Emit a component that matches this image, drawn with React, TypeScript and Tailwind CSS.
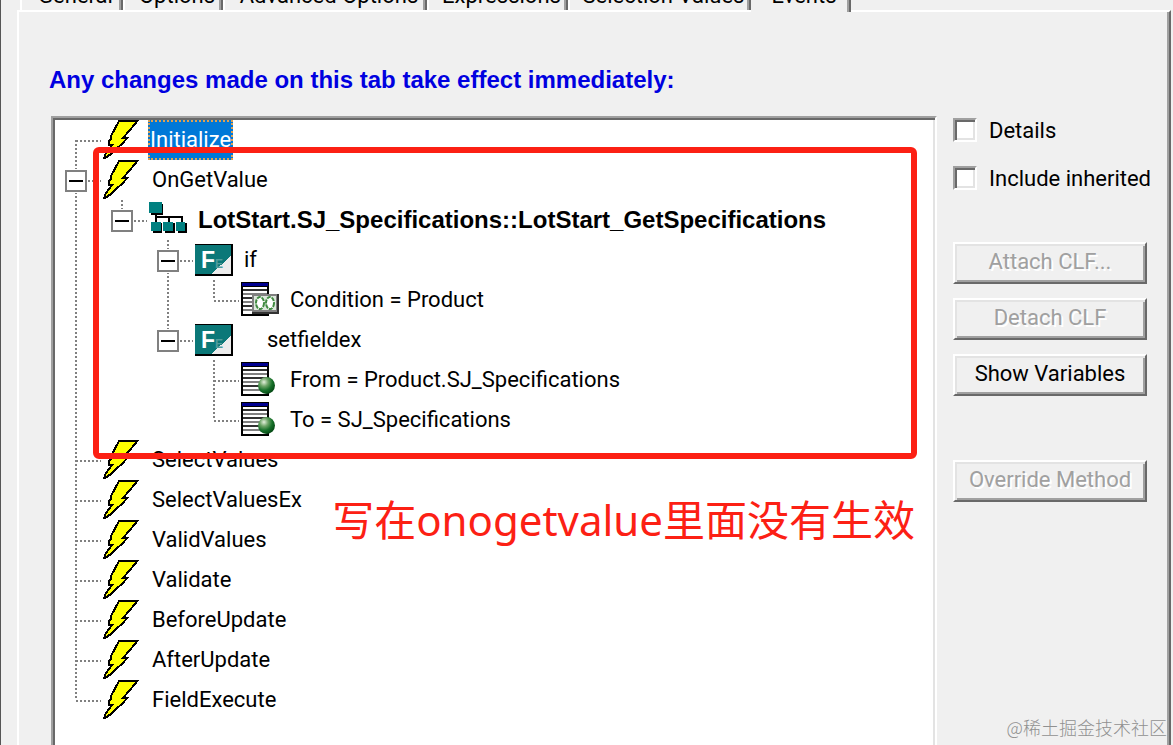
import type { ReactNode } from "react";
import clsx from "clsx";

type Guide = "none" | "line" | "tee" | "corner" | "first" | "expander" | "expanderEnd";
type IconName = "bolt" | "flow" | "func" | "condition" | "field";

interface Row {
  label: string;
  icon: IconName;
  guides: Guide[];
  bold?: boolean;
  selected?: boolean;
  indented?: boolean;
}

const rows: Row[] = [
  { label: "Initialize", icon: "bolt", guides: ["first"], selected: true },
  { label: "OnGetValue", icon: "bolt", guides: ["expander"] },
  {
    label: "LotStart.SJ_Specifications::LotStart_GetSpecifications",
    icon: "flow",
    guides: ["line", "expanderEnd"],
    bold: true,
  },
  { label: "if", icon: "func", guides: ["line", "none", "expander"] },
  { label: "Condition = Product", icon: "condition", guides: ["line", "none", "line", "corner"] },
  { label: "setfieldex", icon: "func", guides: ["line", "none", "expanderEnd"], indented: true },
  { label: "From = Product.SJ_Specifications", icon: "field", guides: ["line", "none", "none", "tee"] },
  { label: "To = SJ_Specifications", icon: "field", guides: ["line", "none", "none", "corner"] },
  { label: "SelectValues", icon: "bolt", guides: ["tee"] },
  { label: "SelectValuesEx", icon: "bolt", guides: ["tee"] },
  { label: "ValidValues", icon: "bolt", guides: ["tee"] },
  { label: "Validate", icon: "bolt", guides: ["tee"] },
  { label: "BeforeUpdate", icon: "bolt", guides: ["tee"] },
  { label: "AfterUpdate", icon: "bolt", guides: ["tee"] },
  { label: "FieldExecute", icon: "bolt", guides: ["corner"] },
];

const tabs = [
  { label: "General", width: "w-[103px]" },
  { label: "Options", width: "w-[100px]" },
  { label: "Advanced Options", width: "w-[204px]" },
  { label: "Expressions", width: "w-[141px]" },
  { label: "Selection Values", width: "w-[183px]" },
  { label: "Events", width: "w-[100px]", active: true },
];

function GuideCell({ type }: { type: Guide }) {
  const expander = type.startsWith("expander");
  const down = type === "line" || type === "tee" || type === "first" || type === "expander";
  const up = type !== "none" && type !== "first";
  return (
    <svg className="h-10 w-[46px] shrink-0" viewBox="0 0 46 40" shapeRendering="crispEdges" aria-hidden="true">
      <g stroke="#808080" strokeWidth="2" strokeDasharray="2 2">
        {up && <path d="M21 0V20" />}
        {down && <path d="M21 20V40" />}
        {type !== "none" && type !== "line" && <path d="M21 21H46" />}
      </g>
      {expander && (
        <>
          <rect x="9" y="9" width="24" height="24" fill="#fff" />
          <rect x="11" y="11" width="20" height="20" fill="#fff" stroke="#808080" strokeWidth="2" />
          <path d="M14 21H28" stroke="#000" strokeWidth="2" />
        </>
      )}
    </svg>
  );
}

function Bolt() {
  return (
    <path
      d="M18 1H36L34 4L22 18H26L22 23L15 29L10 34L4 38H3L5 33L11 25H8V21L10 19V16Z"
      fill="#ff0"
      stroke="#000"
      strokeWidth="2"
    />
  );
}

function Flow() {
  return (
    <>
      <path d="M9 13V24M9 17H35V24M22 17V24" fill="none" stroke="#000" strokeWidth="2" />
      <path d="M4 4H16V15H4ZM6 23H15V33H6ZM18 23H28V33H18ZM31 23H40V33H31Z" fill="#000" />
      <path d="M2 2H15V13H2ZM4 22H14V31H4ZM16 22H26V31H16ZM29 22H38V31H29Z" fill="#008080" />
    </>
  );
}

function Func() {
  return (
    <>
      <rect x="2" y="4" width="38" height="32" fill="#000" />
      <rect x="2" y="5" width="36" height="29" fill="#0b7878" />
      <path d="M38 16V34H18Z" fill="#ececec" />
      <text x="8" y="28" fill="#fff" fontFamily="Liberation Sans" fontSize="23" fontWeight="700">F</text>
      <text x="22" y="28" fill="#4f9c9c" fontFamily="Liberation Sans" fontSize="12" fontWeight="700">E</text>
    </>
  );
}

function Sheet() {
  return (
    <>
      <rect x="2" y="2" width="28" height="34" fill="#000" />
      <rect x="4" y="7" width="24" height="27" fill="#fff" />
      <rect x="3" y="3" width="26" height="3" fill="#000090" />
      <path d="M4 10H28M4 18H28M4 26H28" stroke="#333" strokeWidth="2" />
      <path d="M4 14H28M4 22H28M4 30H28" stroke="#808080" strokeWidth="2" />
    </>
  );
}

function Condition() {
  return (
    <>
      <Sheet />
      <rect x="13" y="14" width="27" height="20" fill="#333" />
      <rect x="13" y="14" width="25" height="18" fill="#808080" />
      <rect x="15" y="16" width="22" height="14" fill="#dde8dd" />
      <g fill="#fff" stroke="#3f8a3f" strokeWidth="2" strokeDasharray="4 1" shapeRendering="auto">
        <ellipse cx="21" cy="23" rx="4" ry="6" />
        <ellipse cx="31" cy="23" rx="4" ry="6" />
      </g>
    </>
  );
}

function Field() {
  return (
    <>
      <defs>
        <radialGradient id="ball" cx="35%" cy="30%" r="70%">
          <stop offset="0" stopColor="#e4f0dc" />
          <stop offset="0.35" stopColor="#6fa568" />
          <stop offset="0.7" stopColor="#17702a" />
          <stop offset="1" stopColor="#064d16" />
        </radialGradient>
      </defs>
      <Sheet />
      <circle cx="27.500" cy="25.500" r="8.500" fill="url(#ball)" shapeRendering="auto" />
    </>
  );
}

const icons: Record<IconName, ReactNode> = {
  bolt: <Bolt />,
  flow: <Flow />,
  func: <Func />,
  condition: <Condition />,
  field: <Field />,
};

function TreeRow({ row }: { row: Row }) {
  return (
    <li role="treeitem" aria-selected={!!row.selected} className="flex h-10 items-center whitespace-nowrap">
      {row.guides.map((guide, i) => (
        <GuideCell key={i} type={guide} />
      ))}
      <svg className="h-10 w-[46px] shrink-0" viewBox="0 0 46 40" shapeRendering="crispEdges" aria-hidden="true">
        {icons[row.icon]}
      </svg>
      <span
        className={clsx(
          "h-10 border-2 leading-9",
          row.bold && "font-['Liberation_Sans',sans-serif] text-2xl/9 font-bold",
          row.indented ? "ml-6" : "ml-px",
          row.selected ? "border-dotted border-[#e0a050] bg-[#0078d7] text-white" : "border-transparent px-0.5",
        )}
      >
        {row.label}
      </span>
    </li>
  );
}

function CheckOption({ label }: { label: string }) {
  return (
    <label className="flex h-6 items-center gap-3 whitespace-nowrap">
      <input
        type="checkbox"
        className="size-6 shrink-0 appearance-none border-2 border-t-[#a0a0a0] border-r-white border-b-white border-l-[#a0a0a0] bg-white shadow-[inset_2px_2px_0_#696969,inset_-2px_-2px_0_#e3e3e3]"
      />
      {label}
    </label>
  );
}

function PanelButton({ label, disabled }: { label: string; disabled?: boolean }) {
  return (
    <button
      type="button"
      disabled={disabled}
      className="h-[42px] w-full border-2 border-t-white border-r-[#696969] border-b-[#696969] border-l-white bg-[#f0f0f0] pb-1 whitespace-nowrap shadow-[inset_2px_2px_0_#e3e3e3,inset_-2px_-2px_0_#a0a0a0] disabled:text-[#a0a0a0] disabled:[text-shadow:2px_2px_0_#fff]"
    >
      {label}
    </button>
  );
}

export default function App() {
  return (
    <div className="relative flex min-h-screen flex-col overflow-hidden border-l border-[#555] bg-[#f0f0f0] pr-0.5 pl-4 font-[Roboto,'Noto_Sans_CJK_SC',sans-serif] text-[22px] text-black">
      <div role="tablist" className="flex h-[10px] shrink-0 pl-[3px]">
        {tabs.map((tab) => (
          <button
            key={tab.label}
            type="button"
            role="tab"
            aria-selected={!!tab.active}
            className={clsx(
              "flex shrink-0 items-end justify-center overflow-hidden pl-2 whitespace-nowrap",
              tab.width,
              tab.active
                ? "relative z-10 h-3 border-r-2 border-[#696969] bg-[#f0f0f0] pb-1 shadow-[inset_-2px_0_0_#a0a0a0]"
                : "h-[10px] border-r-2 border-l-2 border-r-[#696969] border-l-white pb-0.5 shadow-[inset_-2px_0_0_#a0a0a0]",
            )}
          >
            <span className="leading-6">{tab.label}</span>
          </button>
        ))}
      </div>

      <main className="flex flex-1 flex-col border-t-2 border-r-2 border-l-2 border-t-white border-r-[#696969] border-l-white pr-[22px] pl-8 shadow-[inset_-2px_0_0_#a0a0a0]">
        <h1 className="-ml-0.5 pt-[52px] pb-5 font-['Liberation_Sans',sans-serif] text-2xl/8 font-bold text-[#0000e0]">
          Any changes made on this tab take effect immediately:
        </h1>
        <div className="flex flex-1 gap-4">
          <div className="relative min-w-0 flex-1 border-2 border-b-0 border-t-[#a0a0a0] border-r-white border-l-[#a0a0a0] bg-white pt-0.5 pl-0.5 shadow-[inset_2px_2px_0_#696969,inset_-2px_0_0_#e3e3e3]">
            <ul role="tree">
              {rows.map((row) => (
                <TreeRow key={row.label} row={row} />
              ))}
            </ul>
            <div className="pointer-events-none absolute top-[29px] right-[18px] left-10 h-[312px] rounded-md border-6 border-[#fc2014]" />
            <p className="absolute top-[372px] right-5 font-['Noto_Sans','Noto_Sans_CJK_SC',sans-serif] text-[42px] leading-[60px] whitespace-nowrap text-[#fc2014]">
              写在onogetvalue里面没有生效
            </p>
          </div>

          <aside className="flex w-[194px] shrink-0 flex-col">
            <div className="flex flex-col gap-6 pt-0.5">
              <CheckOption label="Details" />
              <CheckOption label="Include inherited" />
            </div>
            <div className="flex flex-col gap-[14px] pt-[52px]">
              <PanelButton label="Attach CLF..." disabled />
              <PanelButton label="Detach CLF" disabled />
              <PanelButton label="Show Variables" />
            </div>
            <div className="pt-16">
              <PanelButton label="Override Method" disabled />
            </div>
          </aside>
        </div>
      </main>

      <p className="absolute right-1.5 bottom-1.5 font-['Noto_Sans_CJK_SC',sans-serif] text-lg leading-6 font-light text-[#909090]">
        @稀土掘金技术社区
      </p>
    </div>
  );
}
